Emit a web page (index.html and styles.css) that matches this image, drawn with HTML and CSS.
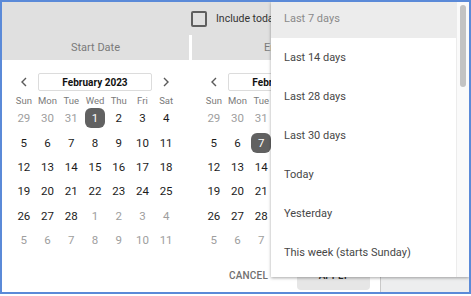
FILE: index.html
```html
<!DOCTYPE html>
<html lang="en">
<head>
  <meta charset="UTF-8">
  <meta name="viewport" content="width=device-width, initial-scale=1.0">
  <title>Date Range Picker</title>
  <link rel="stylesheet" href="styles.css">
</head>
<body>
  <div class="frame">
    <div class="dialog">
      <div class="top">
        <label class="include">
          <span class="checkbox"></span>
          Include today
        </label>
        <div class="tabs">
          <div class="tab">Start Date</div>
          <div class="tab">End Date</div>
          <div class="tab-fill"></div>
        </div>
      </div>

      <div class="body">
        <div class="main">
          <div class="calendars">
            <div class="cal">
              <div class="cal-head">
                <span class="nav"><svg width="6" height="10" viewBox="0 0 6 10"><polyline points="5,1 1,5 5,9" /></svg></span>
                <div class="month">February 2023</div>
                <span class="nav"><svg width="6" height="10" viewBox="0 0 6 10"><polyline points="1,1 5,5 1,9" /></svg></span>
              </div>
              <div class="dows">
                <span>Sun</span><span>Mon</span><span>Tue</span><span>Wed</span><span>Thu</span><span>Fri</span><span>Sat</span>
              </div>
              <div class="days">
                <span class="day out">29</span><span class="day out">30</span><span class="day out">31</span><span class="day"><span class="pick">1</span></span><span class="day">2</span><span class="day">3</span><span class="day">4</span>
                <span class="day">5</span><span class="day">6</span><span class="day">7</span><span class="day">8</span><span class="day">9</span><span class="day">10</span><span class="day">11</span>
                <span class="day">12</span><span class="day">13</span><span class="day">14</span><span class="day">15</span><span class="day">16</span><span class="day">17</span><span class="day">18</span>
                <span class="day">19</span><span class="day">20</span><span class="day">21</span><span class="day">22</span><span class="day">23</span><span class="day">24</span><span class="day">25</span>
                <span class="day">26</span><span class="day">27</span><span class="day">28</span><span class="day out">1</span><span class="day out">2</span><span class="day out">3</span><span class="day out">4</span>
                <span class="day out">5</span><span class="day out">6</span><span class="day out">7</span><span class="day out">8</span><span class="day out">9</span><span class="day out">10</span><span class="day out">11</span>
              </div>
            </div>

            <div class="cal">
              <div class="cal-head">
                <span class="nav"><svg width="6" height="10" viewBox="0 0 6 10"><polyline points="5,1 1,5 5,9" /></svg></span>
                <div class="month">February 2023</div>
                <span class="nav"><svg width="6" height="10" viewBox="0 0 6 10"><polyline points="1,1 5,5 1,9" /></svg></span>
              </div>
              <div class="dows">
                <span>Sun</span><span>Mon</span><span>Tue</span><span>Wed</span><span>Thu</span><span>Fri</span><span>Sat</span>
              </div>
              <div class="days">
                <span class="day out">29</span><span class="day out">30</span><span class="day out">31</span><span class="day">1</span><span class="day">2</span><span class="day">3</span><span class="day">4</span>
                <span class="day">5</span><span class="day">6</span><span class="day"><span class="pick">7</span></span><span class="day">8</span><span class="day">9</span><span class="day">10</span><span class="day">11</span>
                <span class="day">12</span><span class="day">13</span><span class="day">14</span><span class="day">15</span><span class="day">16</span><span class="day">17</span><span class="day">18</span>
                <span class="day">19</span><span class="day">20</span><span class="day">21</span><span class="day">22</span><span class="day">23</span><span class="day">24</span><span class="day">25</span>
                <span class="day">26</span><span class="day">27</span><span class="day">28</span><span class="day out">1</span><span class="day out">2</span><span class="day out">3</span><span class="day out">4</span>
                <span class="day out">5</span><span class="day out">6</span><span class="day out">7</span><span class="day out">8</span><span class="day out">9</span><span class="day out">10</span><span class="day out">11</span>
              </div>
            </div>
          </div>

          <div class="footer">
            <span class="cancel">CANCEL</span>
            <button class="apply">APPLY</button>
          </div>
        </div>
        <div class="side"></div>
      </div>
    </div>

    <div class="dropdown">
      <ul class="options">
        <li class="option active">Last 7 days</li>
        <li class="option">Last 14 days</li>
        <li class="option">Last 28 days</li>
        <li class="option">Last 30 days</li>
        <li class="option">Today</li>
        <li class="option">Yesterday</li>
        <li class="option">This week (starts Sunday)</li>
        <li class="option">Last week (starts Sunday)</li>
      </ul>
      <div class="scrollbar">
        <div class="thumb"></div>
      </div>
    </div>
  </div>
</body>
</html>
```

FILE: styles.css
```css
:root {
  --frame-blue: #5b8ad8;
  --header-bg: #e0e0e0;
  --text-dark: #1c1c1c;
  --text-muted: #9e9e9e;
  --text-label: #7a7a7a;
  --pick-bg: #616161;
}

body {
  margin: 0;
  background: #ffffff;
  font-family: Roboto, "Noto Sans", Arial, sans-serif;
}

.frame {
  position: relative;
  width: 471px;
  height: 294px;
  box-sizing: border-box;
  border: 2px solid var(--frame-blue);
  overflow: hidden;
}

.dialog {
  display: flex;
  flex-direction: column;
  height: 100%;
}

/* top grey band */
.top {
  background: var(--header-bg);
}

.include {
  display: flex;
  align-items: center;
  gap: 9px;
  height: 33px;
  padding-left: 189px;
  font-size: 10.5px;
  color: #333333;
}

.checkbox {
  width: 16px;
  height: 16px;
  box-sizing: border-box;
  border: 2px solid #5f5f5f;
  border-radius: 2px;
}

.tabs {
  display: flex;
  gap: 3px;
  height: 25px;
  background: #ffffff;
}

.tab {
  display: flex;
  align-items: center;
  justify-content: center;
  background: var(--header-bg);
  font-size: 11px;
  color: var(--text-label);
}

.tab:first-child {
  width: 187px;
}

.tab:nth-child(2) {
  width: 188px;
}

.tab-fill {
  flex: 1;
  background: var(--header-bg);
}

/* body */
.body {
  flex: 1;
  display: flex;
}

.main {
  width: 378px;
  display: flex;
  flex-direction: column;
}

.side {
  flex: 1;
  background: #edeeef;
  border-left: 1px solid #c9c9c9;
}

.calendars {
  display: flex;
  gap: 24px;
  padding: 13px 0 0 10px;
}

.cal {
  width: 166px;
}

.cal-head,
.dows,
.days {
  display: grid;
  grid-template-columns: repeat(7, 1fr);
}

.cal-head {
  height: 18px;
  align-items: center;
}

.nav {
  display: flex;
  justify-content: center;
}

.nav polyline {
  fill: none;
  stroke: #5a5a5a;
  stroke-width: 1.4;
}

.month {
  grid-column: 2 / 7;
  margin: 0 2px;
  height: 18px;
  box-sizing: border-box;
  display: flex;
  align-items: center;
  justify-content: center;
  background: #ffffff;
  border: 1px solid #dcdcdc;
  border-radius: 2px;
  font-size: 10px;
  font-weight: 700;
  color: #111111;
}

.dows {
  margin-top: 3px;
  height: 12px;
  align-items: center;
  text-align: center;
  font-size: 9.5px;
  color: var(--text-label);
}

.days {
  grid-auto-rows: 24.4px;
}

.day {
  display: flex;
  align-items: center;
  justify-content: center;
  font-size: 11.5px;
  color: var(--text-dark);
}

.day.out {
  color: var(--text-muted);
}

.pick {
  width: 20px;
  height: 20px;
  display: flex;
  align-items: center;
  justify-content: center;
  border-radius: 6px;
  background: var(--pick-bg);
  color: #ffffff;
}

.footer {
  margin-top: auto;
  display: flex;
  justify-content: flex-end;
  align-items: center;
  gap: 29px;
  padding: 0 10px 2px 0;
}

.cancel {
  font-size: 10px;
  font-weight: 500;
  color: #707070;
  letter-spacing: 0.2px;
}

.apply {
  width: 73px;
  height: 30px;
  border: none;
  border-radius: 4px;
  background: #e6e6e6;
  font-family: inherit;
  font-size: 10px;
  font-weight: 500;
  color: #2a2a2a;
}

/* preset dropdown over the dialog */
.dropdown {
  position: absolute;
  top: 0;
  left: 269px;
  width: 198px;
  height: 275px;
  display: flex;
  background: #ffffff;
  box-shadow: 0 1px 3px rgba(0, 0, 0, 0.35);
  overflow: hidden;
}

.options {
  flex: 1;
  list-style: none;
  margin: -3px 0 0;
  padding: 0;
}

.option {
  height: 39px;
  display: flex;
  align-items: center;
  padding-left: 13px;
  font-size: 11px;
  color: #474747;
}

.option.active {
  background: #ececec;
  color: #8a8a8a;
}

.scrollbar {
  width: 12px;
  background: #fafafa;
  border-left: 1px solid #ececec;
}

.thumb {
  width: 6px;
  height: 82px;
  margin: 3px 0 0 3px;
  border-radius: 3px;
  background: #c3c3c3;
}
```
